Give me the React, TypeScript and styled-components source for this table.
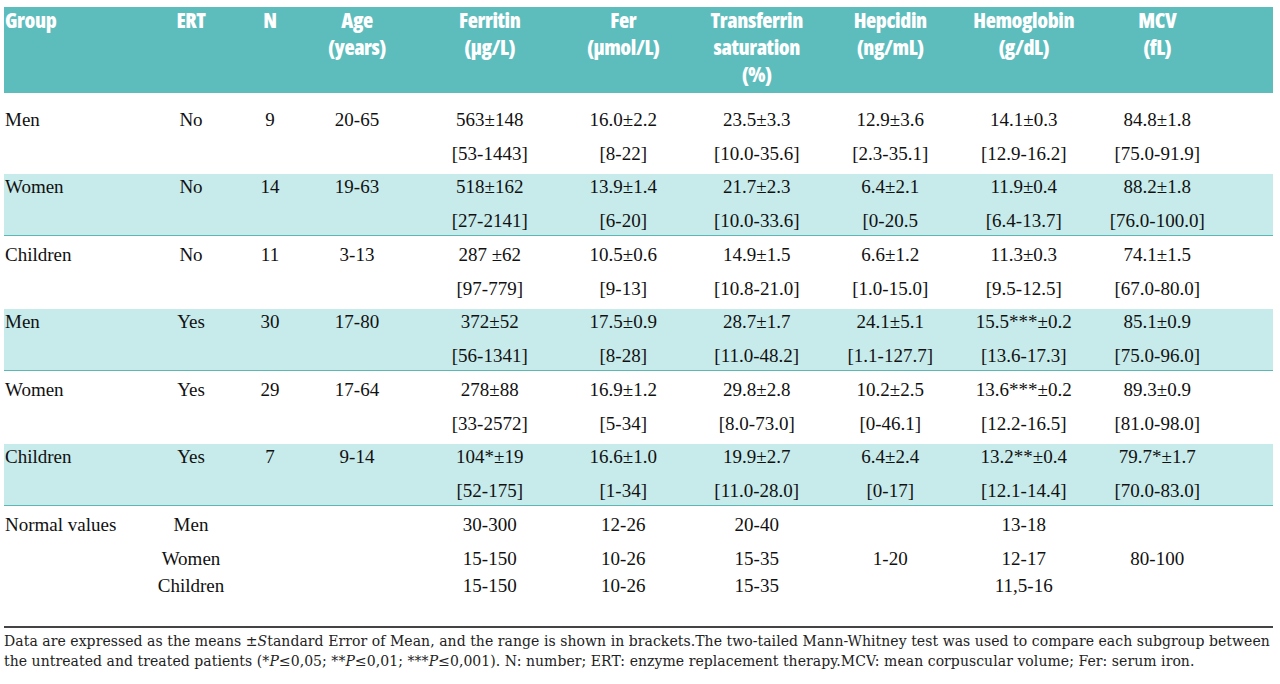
import styled, { createGlobalStyle } from 'styled-components';

const GlobalStyle = createGlobalStyle`
  html, body {
    margin: 0;
    padding: 0;
    background: #fff;
  }
  body {
    font-family: 'Liberation Serif', 'Times New Roman', serif;
    color: #111;
  }
`;

const COLS = '146px 82px 76px 115px repeat(6, 133.5px) 1fr';

type DataRow = {
  group: string;
  ert: string;
  n: string;
  age: string;
  values: [string, string][];
};

const headers: string[][] = [
  ['Group'],
  ['ERT'],
  ['N'],
  ['Age', '(years)'],
  ['Ferritin', '(μg/L)'],
  ['Fer', '(μmol/L)'],
  ['Transferrin', 'saturation', '(%)'],
  ['Hepcidin', '(ng/mL)'],
  ['Hemoglobin', '(g/dL)'],
  ['MCV', '(fL)'],
];

const rows: DataRow[] = [
  {
    group: 'Men', ert: 'No', n: '9', age: '20-65',
    values: [
      ['563±148', '[53-1443]'], ['16.0±2.2', '[8-22]'], ['23.5±3.3', '[10.0-35.6]'],
      ['12.9±3.6', '[2.3-35.1]'], ['14.1±0.3', '[12.9-16.2]'], ['84.8±1.8', '[75.0-91.9]'],
    ],
  },
  {
    group: 'Women', ert: 'No', n: '14', age: '19-63',
    values: [
      ['518±162', '[27-2141]'], ['13.9±1.4', '[6-20]'], ['21.7±2.3', '[10.0-33.6]'],
      ['6.4±2.1', '[0-20.5'], ['11.9±0.4', '[6.4-13.7]'], ['88.2±1.8', '[76.0-100.0]'],
    ],
  },
  {
    group: 'Children', ert: 'No', n: '11', age: '3-13',
    values: [
      ['287 ±62', '[97-779]'], ['10.5±0.6', '[9-13]'], ['14.9±1.5', '[10.8-21.0]'],
      ['6.6±1.2', '[1.0-15.0]'], ['11.3±0.3', '[9.5-12.5]'], ['74.1±1.5', '[67.0-80.0]'],
    ],
  },
  {
    group: 'Men', ert: 'Yes', n: '30', age: '17-80',
    values: [
      ['372±52', '[56-1341]'], ['17.5±0.9', '[8-28]'], ['28.7±1.7', '[11.0-48.2]'],
      ['24.1±5.1', '[1.1-127.7]'], ['15.5***±0.2', '[13.6-17.3]'], ['85.1±0.9', '[75.0-96.0]'],
    ],
  },
  {
    group: 'Women', ert: 'Yes', n: '29', age: '17-64',
    values: [
      ['278±88', '[33-2572]'], ['16.9±1.2', '[5-34]'], ['29.8±2.8', '[8.0-73.0]'],
      ['10.2±2.5', '[0-46.1]'], ['13.6***±0.2', '[12.2-16.5]'], ['89.3±0.9', '[81.0-98.0]'],
    ],
  },
  {
    group: 'Children', ert: 'Yes', n: '7', age: '9-14',
    values: [
      ['104*±19', '[52-175]'], ['16.6±1.0', '[1-34]'], ['19.9±2.7', '[11.0-28.0]'],
      ['6.4±2.4', '[0-17]'], ['13.2**±0.4', '[12.1-14.4]'], ['79.7*±1.7', '[70.0-83.0]'],
    ],
  },
];

const normals: { label: string; sex: string; lh: number; values: string[] }[] = [
  { label: 'Normal values', sex: 'Men', lh: 34, values: ['30-300', '12-26', '20-40', '', '13-18', ''] },
  { label: '', sex: 'Women', lh: 34, values: ['15-150', '10-26', '15-35', '1-20', '12-17', '80-100'] },
  { label: '', sex: 'Children', lh: 20, values: ['15-150', '10-26', '15-35', '', '11,5-16', ''] },
];

const App = () => {
  return (
    <Page>
      <GlobalStyle />
      <Head>
        {headers.map((lines, i) => (
          <Cell key={`h-${i}`}>
            {lines.map(l => (
              <div key={l}>{l}</div>
            ))}
          </Cell>
        ))}
      </Head>
      {rows.map((r, i) => (
        <Row key={`r-${i}`} $shaded={i % 2 === 1}>
          <Cell>{r.group}</Cell>
          <Cell>{r.ert}</Cell>
          <Cell>{r.n}</Cell>
          <Cell>{r.age}</Cell>
          {r.values.map(([mean, range], j) => (
            <Cell key={`v-${j}`}>
              <div>{mean}</div>
              <div>{range}</div>
            </Cell>
          ))}
        </Row>
      ))}
      {normals.map((n, i) => (
        <NormalLine key={`n-${i}`} $lh={n.lh} $first={i === 0}>
          <Cell>{n.label}</Cell>
          <Cell>{n.sex}</Cell>
          <Cell />
          <Cell />
          {n.values.map((v, j) => (
            <Cell key={`nv-${j}`}>{v}</Cell>
          ))}
        </NormalLine>
      ))}
      <Note>
        Data are expressed as the means ±<i>S</i>tandard Error of Mean, and the range is shown in brackets.The
        two-tailed Mann-Whitney test was used to compare each subgroup between
        <br />
        the untreated and treated patients (*<i>P</i>≤0,05; **<i>P</i>≤0,01; ***<i>P</i>≤0,001). N: number; ERT:
        enzyme replacement therapy.MCV: mean corpuscular volume; Fer: serum iron.
      </Note>
    </Page>
  );
};

export default App;

const Page = styled.div`
  width: 1280px;
  box-sizing: border-box;
  padding: 7px 7px 0 4px;
`;

const Grid = styled.div`
  display: grid;
  grid-template-columns: ${COLS};

  & > :first-child {
    text-align: left;
    padding-left: 1px;
  }

  & > :nth-child(4) {
    padding-right: 17px;
  }
`;

const Cell = styled.div`
  text-align: center;
  white-space: nowrap;
`;

const Head = styled(Grid)`
  background: #5dbdbd;
  color: #fff;
  font-family: 'Open Sans', 'DejaVu Sans Condensed', sans-serif;
  font-stretch: 75%;
  font-weight: 800;
  font-size: 21px;
  line-height: 27px;
  letter-spacing: -0.4px;
  padding-bottom: 5px;
  margin-bottom: 8px;
`;

const Row = styled(Grid)<{ $shaded?: boolean }>`
  font-size: 19px;
  line-height: 34px;
  background: ${p => (p.$shaded ? '#c7eaea' : 'transparent')};
  padding: ${p => (p.$shaded ? '0' : '2px 0 3px')};
  border-bottom: ${p => (p.$shaded ? '1px solid #5cb8b5' : 'none')};

  & > div {
    margin: ${p => (p.$shaded ? '-4px 0 -3px' : '0')};
  }
`;

const NormalLine = styled(Grid)<{ $lh: number; $first?: boolean }>`
  font-size: 19px;
  line-height: ${p => p.$lh}px;
  padding-top: ${p => (p.$first ? '2px' : '0')};
`;

const Note = styled.p`
  margin: 30px 0 0;
  border-top: 2px solid #444;
  padding-top: 3px;
  font-family: 'DejaVu Serif', serif;
  font-size: 14px;
  line-height: 20px;
  letter-spacing: 0.06px;
  color: #222;
  white-space: nowrap;

  i {
    font-style: italic;
  }
`;
